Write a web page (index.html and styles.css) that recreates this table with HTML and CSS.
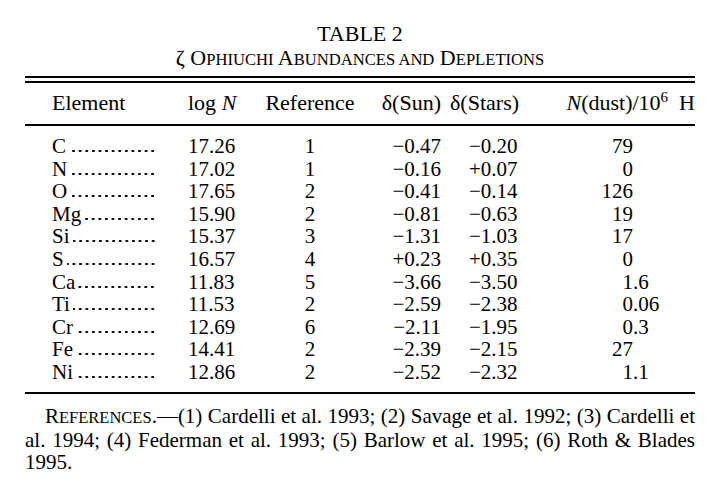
FILE: index.html
```html
<!DOCTYPE html>
<html>
<head>
<meta charset="utf-8">
<link rel="stylesheet" href="styles.css">
</head>
<body>
<div class="page">
  <div class="title">TABLE 2</div>
  <div class="subtitle">ζ O<span class="sm">PHIUCHI</span> A<span class="sm">BUNDANCES AND</span> D<span class="sm">EPLETIONS</span></div>
  <div class="double-rule"></div>
  <div class="grid head">
    <div class="c1">Element</div>
    <div class="c2">log <i>N</i></div>
    <div class="c3">Reference</div>
    <div class="c4">δ(Sun)</div>
    <div class="c5h">δ(Stars)</div>
    <div class="c6h"><i>N</i>(dust)/10<sup>6</sup><span class="hsp"></span>H</div>
  </div>
  <div class="grid body">
    <div class="c1"><span class="el">C</span><span class="lead"></span></div><div class="c2">17.26</div><div class="c3">1</div><div class="c4">−0.47</div><div class="c5">−0.20</div><div class="c6"><span class="int">79</span><span class="frac"></span></div>
    <div class="c1"><span class="el">N</span><span class="lead"></span></div><div class="c2">17.02</div><div class="c3">1</div><div class="c4">−0.16</div><div class="c5">+0.07</div><div class="c6"><span class="int">0</span><span class="frac"></span></div>
    <div class="c1"><span class="el">O</span><span class="lead"></span></div><div class="c2">17.65</div><div class="c3">2</div><div class="c4">−0.41</div><div class="c5">−0.14</div><div class="c6"><span class="int">126</span><span class="frac"></span></div>
    <div class="c1"><span class="el">Mg</span><span class="lead"></span></div><div class="c2">15.90</div><div class="c3">2</div><div class="c4">−0.81</div><div class="c5">−0.63</div><div class="c6"><span class="int">19</span><span class="frac"></span></div>
    <div class="c1"><span class="el">Si</span><span class="lead"></span></div><div class="c2">15.37</div><div class="c3">3</div><div class="c4">−1.31</div><div class="c5">−1.03</div><div class="c6"><span class="int">17</span><span class="frac"></span></div>
    <div class="c1"><span class="el">S</span><span class="lead"></span></div><div class="c2">16.57</div><div class="c3">4</div><div class="c4">+0.23</div><div class="c5">+0.35</div><div class="c6"><span class="int">0</span><span class="frac"></span></div>
    <div class="c1"><span class="el">Ca</span><span class="lead"></span></div><div class="c2">11.83</div><div class="c3">5</div><div class="c4">−3.66</div><div class="c5">−3.50</div><div class="c6"><span class="int">1</span><span class="frac">.6</span></div>
    <div class="c1"><span class="el">Ti</span><span class="lead"></span></div><div class="c2">11.53</div><div class="c3">2</div><div class="c4">−2.59</div><div class="c5">−2.38</div><div class="c6"><span class="int">0</span><span class="frac">.06</span></div>
    <div class="c1"><span class="el">Cr</span><span class="lead"></span></div><div class="c2">12.69</div><div class="c3">6</div><div class="c4">−2.11</div><div class="c5">−1.95</div><div class="c6"><span class="int">0</span><span class="frac">.3</span></div>
    <div class="c1"><span class="el">Fe</span><span class="lead"></span></div><div class="c2">14.41</div><div class="c3">2</div><div class="c4">−2.39</div><div class="c5">−2.15</div><div class="c6"><span class="int">27</span><span class="frac"></span></div>
    <div class="c1"><span class="el">Ni</span><span class="lead"></span></div><div class="c2">12.86</div><div class="c3">2</div><div class="c4">−2.52</div><div class="c5">−2.32</div><div class="c6"><span class="int">1</span><span class="frac">.1</span></div>
  </div>
  <p class="refs">R<span class="sm2">EFERENCES</span>.—(1) Cardelli et al. 1993; (2) Savage et al. 1992; (3) Cardelli et al. 1994; (4) Federman et al. 1993; (5) Barlow et al. 1995; (6) Roth &amp; Blades 1995.</p>
</div>
</body>
</html>
```

FILE: styles.css
```css
html, body {
  margin: 0;
  padding: 0;
  background: #fff;
}
body {
  font-family: "Liberation Serif", "Times New Roman", serif;
  font-size: 21px;
  color: #000;
}
.page {
  width: 670px;
  margin-left: 25px;
  padding-top: 22px;
}
.title {
  text-align: center;
  line-height: 24px;
  font-size: 22px;
}
.subtitle {
  text-align: center;
  line-height: 24px;
  font-size: 22px;
}
.sm {
  font-size: 16.6px;
}
.double-rule {
  margin-top: 4px;
  height: 3px;
  border-top: 2px solid #000;
  border-bottom: 2px solid #000;
}
.grid {
  display: grid;
  grid-template-columns: 150px 80px 110px 80px 95px 155px;
}
.head {
  padding: 8px 0 9px;
  line-height: 24px;
  font-size: 22px;
  border-bottom: 2px solid #000;
  white-space: nowrap;
}
.body {
  padding: 9px 0 8px;
  line-height: 22.6px;
  border-bottom: 2px solid #000;
}
.c1 {
  padding-left: 27px;
  display: flex;
  white-space: nowrap;
  padding-right: 18px;
}
.lead {
  flex: 1;
  margin-left: 3px;
  background-image: radial-gradient(circle, #000 1px, transparent 1.5px);
  background-size: 6.6px 4px;
  background-repeat: repeat-x;
  background-position: right 1px top 14px;
}
.c2 {
  padding-left: 13px;
}
.c3 {
  text-align: center;
}
.c4 {
  text-align: right;
  padding-right: 4px;
}
.c5h {
  padding-left: 5px;
}
.c5 {
  padding-left: 24px;
}
.c6h {
  text-align: right;
}
.c6h sup {
  font-size: 15px;
  line-height: 0;
  vertical-align: 8px;
}
.hsp {
  display: inline-block;
  width: 11px;
}
.c6 {
  display: flex;
}
.int {
  width: 93px;
  text-align: right;
}
.refs {
  margin: 11px 0 0;
  line-height: 22px;
  text-align: justify;
  text-indent: 20px;
}
.sm2 {
  font-size: 16.5px;
}
```
